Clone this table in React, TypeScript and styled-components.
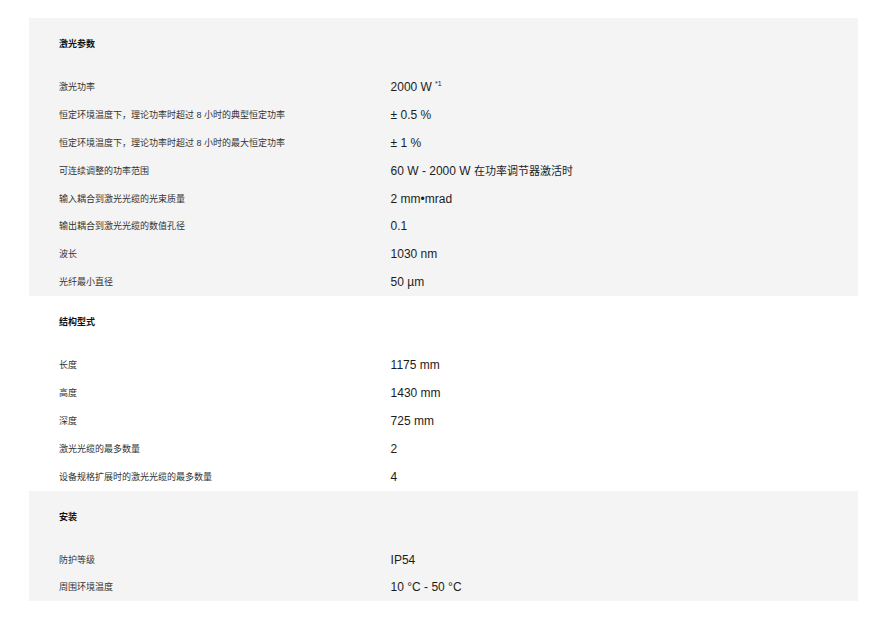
import React from "react";
import styled, { createGlobalStyle } from "styled-components";

const GlobalStyle = createGlobalStyle`
  html, body { margin: 0; padding: 0; background: #ffffff; }
  body { font-family: "Liberation Sans", "Noto Sans CJK SC", sans-serif; }
`;

const Page = styled.div`
  padding: 18px 16px 0 29px;
`;

const Section = styled.section<{ $shaded: boolean }>`
  background: ${(p) => (p.$shaded ? "#f4f4f4" : "#ffffff")};
`;

const SectionTitle = styled.h3`
  margin: 0;
  height: 55px;
  box-sizing: border-box;
  padding: 20px 0 0 30px;
  font-family: "Noto Sans CJK SC", sans-serif;
  font-size: 9px;
  line-height: 12px;
  font-weight: 700;
  color: #111111;
`;

const Row = styled.div`
  display: grid;
  grid-template-columns: 40% 1fr;
  height: 27.9px;
  align-items: center;
`;

const Label = styled.div`
  padding-left: 30px;
  font-family: "Liberation Sans", "Noto Sans CJK SC", sans-serif;
  font-size: 9px;
  line-height: 12px;
  color: #333333;
  white-space: nowrap;
`;

const Value = styled.div`
  padding-left: 30px;
  font-family: "Liberation Sans", "Noto Sans CJK SC", sans-serif;
  font-size: 12px;
  line-height: 14px;
  color: #1c1c1c;
  white-space: nowrap;
`;

const CjkNote = styled.span`
  font-family: "Noto Sans CJK SC", sans-serif;
  font-size: 11px;
`;

const Sup = styled.sup`
  font-size: 7px;
  line-height: 0;
  vertical-align: 5px;
  margin-left: 3px;
`;

type Item = { label: string; value: React.ReactNode };
type Group = { title: string; shaded: boolean; items: Item[] };

const groups: Group[] = [
  {
    title: "激光参数",
    shaded: true,
    items: [
      { label: "激光功率", value: <>2000 W<Sup>*1</Sup></> },
      { label: "恒定环境温度下，理论功率时超过 8 小时的典型恒定功率", value: "± 0.5 %" },
      { label: "恒定环境温度下，理论功率时超过 8 小时的最大恒定功率", value: "± 1 %" },
      {
        label: "可连续调整的功率范围",
        value: <>60 W - 2000 W <CjkNote>在功率调节器激活时</CjkNote></>,
      },
      { label: "输入耦合到激光光缆的光束质量", value: "2 mm•mrad" },
      { label: "输出耦合到激光光缆的数值孔径", value: "0.1" },
      { label: "波长", value: "1030 nm" },
      { label: "光纤最小直径", value: "50 µm" },
    ],
  },
  {
    title: "结构型式",
    shaded: false,
    items: [
      { label: "长度", value: "1175 mm" },
      { label: "高度", value: "1430 mm" },
      { label: "深度", value: "725 mm" },
      { label: "激光光缆的最多数量", value: "2" },
      { label: "设备规格扩展时的激光光缆的最多数量", value: "4" },
    ],
  },
  {
    title: "安装",
    shaded: true,
    items: [
      { label: "防护等级", value: "IP54" },
      { label: "周围环境温度", value: "10 °C - 50 °C" },
    ],
  },
];

export default function App() {
  return (
    <>
      <GlobalStyle />
      <Page>
        {groups.map((g) => (
          <Section key={g.title} $shaded={g.shaded}>
            <SectionTitle>{g.title}</SectionTitle>
            {g.items.map((it) => (
              <Row key={it.label}>
                <Label>{it.label}</Label>
                <Value>{it.value}</Value>
              </Row>
            ))}
          </Section>
        ))}
      </Page>
    </>
  );
}
